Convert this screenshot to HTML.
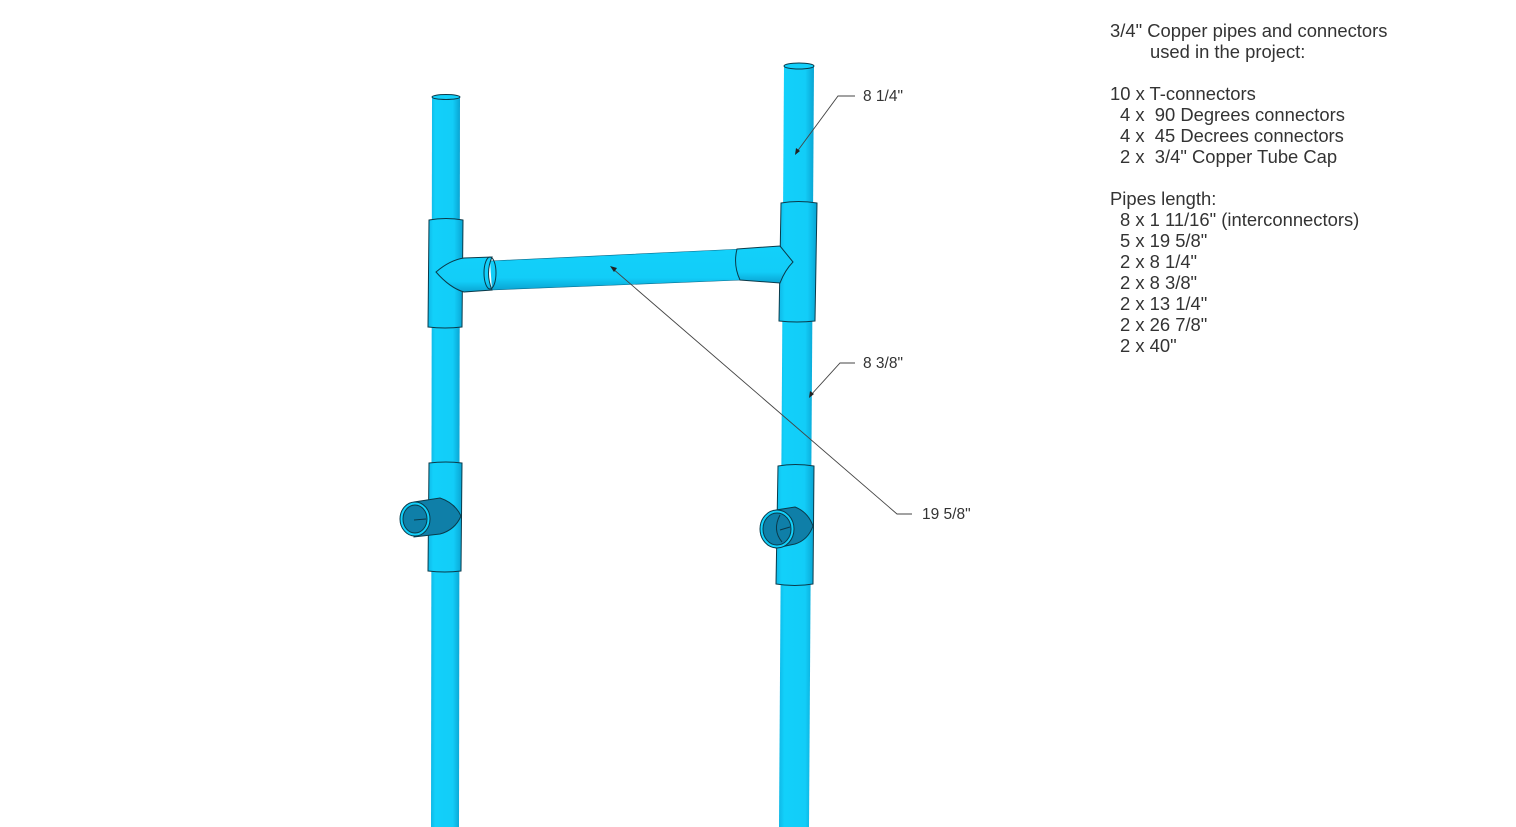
<!DOCTYPE html>
<html><head><meta charset="utf-8"><style>
html,body{margin:0;padding:0;background:#fff;width:1516px;height:827px;overflow:hidden}
svg{display:block}
text{white-space:pre}
</style></head><body>
<svg width="1516" height="827" viewBox="0 0 1516 827" xmlns="http://www.w3.org/2000/svg" xml:space="preserve">
<defs>
<linearGradient id="v" x1="0" x2="1" y1="0" y2="0">
<stop offset="0" stop-color="#10b8e6"/><stop offset="0.15" stop-color="#12d0fa"/><stop offset="0.75" stop-color="#12cdf8"/><stop offset="1" stop-color="#0aa4d2"/>
</linearGradient>
<linearGradient id="h" x1="0" x2="0" y1="0" y2="1">
<stop offset="0" stop-color="#12d0fa"/><stop offset="0.7" stop-color="#12cdf8"/><stop offset="1" stop-color="#0aa4d2"/>
</linearGradient>
</defs>
<g stroke="#0a3a4a" stroke-width="1">
<path d="M432 97 L460 97 L459 827 L431 827 Z" fill="url(#v)" stroke="none"/>
<ellipse cx="446" cy="97" rx="14" ry="2.5" fill="#12d0fa"/>
<path d="M429 220 Q446 217 463 220 L462 327 Q445 329 428 327 Z" fill="url(#v)"/>
<path d="M429 463 Q446 461 462 463 L461 571 Q445 573 428 571 Z" fill="url(#v)"/>
<path d="M784 66 L814 66 L809 827 L779 827 Z" fill="url(#v)" stroke="none"/>
<ellipse cx="799" cy="66" rx="15" ry="3" fill="#12d0fa"/>
<path d="M781 203 Q798 200 817 203 L815 321 Q797 323 779 321 Z" fill="url(#v)"/>
<path d="M778 466 Q795 463 814 466 L813 584 Q795 587 776 584 Z" fill="url(#v)"/>
<path d="M490 261 L742 249 L742 280 L492 290 Z" fill="url(#h)" stroke="none"/>
<path d="M490 261 L742 249 M742 280 L492 290" fill="none" stroke="#0a6a8a" stroke-width="0.6"/>
<path d="M436 272 Q450 260 464 258 L492 257 Q485 273 492 290 L464 292 Q450 288 436 272 Z" fill="url(#h)"/>
<ellipse cx="490" cy="273" rx="6" ry="16" fill="none"/>
<path d="M737 249 L780 246 L793 262 Q785 270 780 283 L740 280 Q733 265 737 249 Z" fill="url(#h)"/>
<path d="M414 502 L440 498 Q455 503 461 516 Q455 530 440 534 L414 537 Z" fill="#0f7fa8"/>
<ellipse cx="415" cy="519" rx="15" ry="17" fill="#12d0fa"/>
<ellipse cx="415" cy="519" rx="12" ry="14" fill="#0f7fa8"/>
<line x1="414" y1="520" x2="426" y2="519"/>
<path d="M776 510 L795 507 Q808 512 813 526 Q808 540 795 544 L776 548 Z" fill="#0f7fa8"/>
<ellipse cx="777" cy="529" rx="17" ry="19" fill="#12d0fa"/>
<ellipse cx="777" cy="529" rx="14" ry="16" fill="#0f7fa8"/>
<path d="M780 515 Q772 530 782 542 M780 530 L790 527" fill="none"/>
</g>
<g stroke="#444" stroke-width="0.9" fill="none">
<path d="M855 96 L838 96 L796 153"/>
<path d="M855 363 L840 363 L810 396"/>
<path d="M912 514 L897 514 L612 268"/>
</g>
<g fill="#222">
<path d="M795 155 l1 -7 l4 3z"/><path d="M809 398 l1 -7 l4 3z"/><path d="M610 266 l7 2 l-3 4z"/>
</g>
<g font-family="Liberation Sans, sans-serif" font-size="15.5" fill="#333">
<text x="863" y="101">8 1/4"</text>
<text x="863" y="368">8 3/8"</text>
<text x="922" y="519">19 5/8"</text>
</g>
<g font-family="Liberation Sans, sans-serif" font-size="18.4" fill="#333">
<text x="1110" y="37">3/4" Copper pipes and connectors</text>
<text x="1150" y="58">used in the project:</text>
<text x="1110" y="100">10 x T-connectors</text>
<text x="1120" y="121">4 x  90 Degrees connectors</text>
<text x="1120" y="142">4 x  45 Decrees connectors</text>
<text x="1120" y="163">2 x  3/4" Copper Tube Cap</text>
<text x="1110" y="205">Pipes length:</text>
<text x="1120" y="226">8 x 1 11/16" (interconnectors)</text>
<text x="1120" y="247">5 x 19 5/8"</text>
<text x="1120" y="268">2 x 8 1/4"</text>
<text x="1120" y="289">2 x 8 3/8"</text>
<text x="1120" y="310">2 x 13 1/4"</text>
<text x="1120" y="331">2 x 26 7/8"</text>
<text x="1120" y="352">2 x 40"</text>
</g>
</svg>
</body></html>
